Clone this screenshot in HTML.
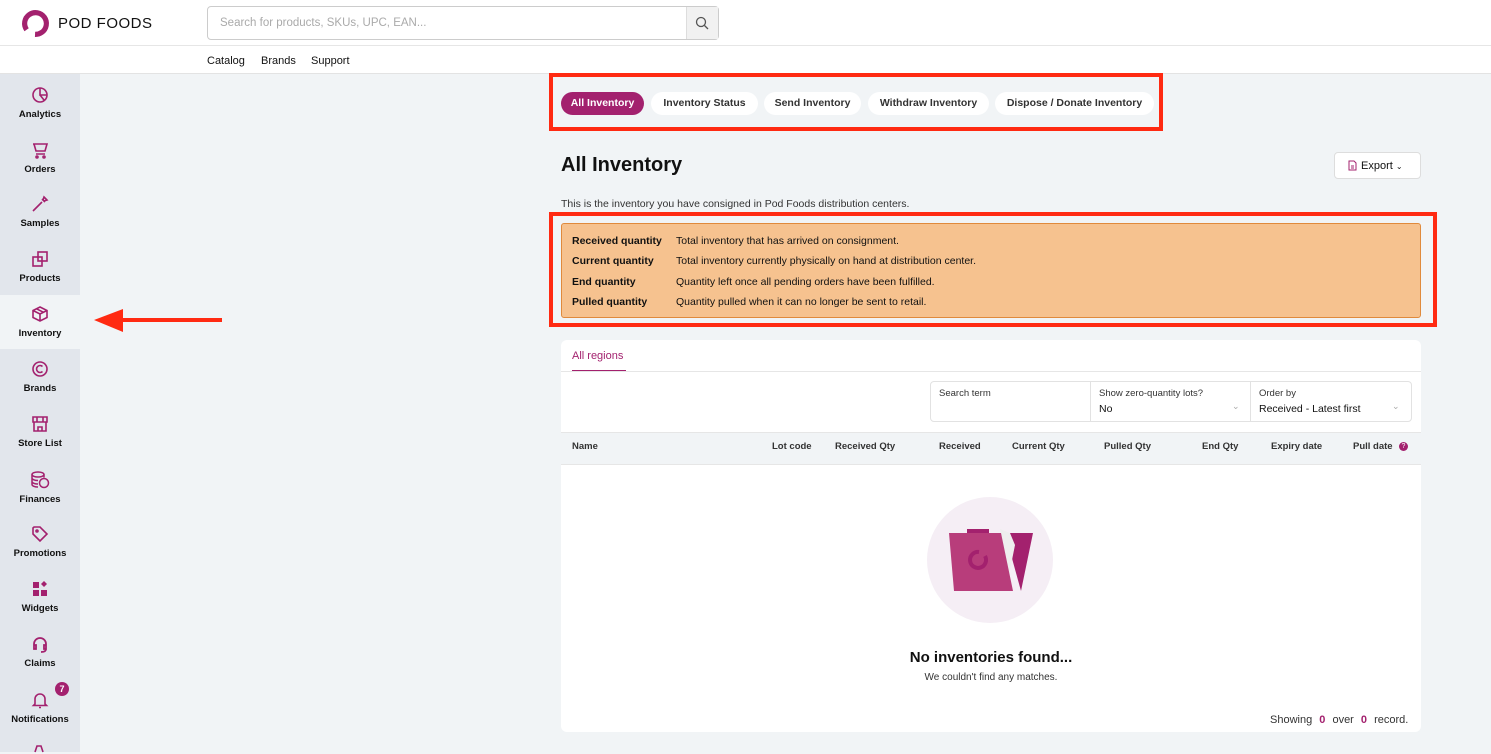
<!DOCTYPE html>
<html><head><style>
*{box-sizing:border-box;margin:0;padding:0}
body{width:1491px;height:752px;overflow:hidden;font-family:"Liberation Sans",sans-serif;background:#f1f4f6;position:relative;color:#111}
.abs{position:absolute}
.hdr{left:0;top:0;width:1491px;height:46px;background:#fff;border-bottom:1px solid #e6e6e6}
.nav{left:0;top:46px;width:1491px;height:28px;background:#fff;border-bottom:1px solid #e3e3e3;font-size:11px}
.side{left:0;top:74px;width:80px;height:678px;background:#e2e6ec}
.item{position:absolute;left:0;width:80px;text-align:center;font-size:9.5px;font-weight:bold;color:#111}
.item svg{display:block;margin:0 auto 5px}
.pill{position:absolute;top:92px;height:23px;border-radius:12px;background:#fff;font-size:10.5px;font-weight:bold;color:#333;line-height:23px;text-align:center}
.red{position:absolute;border:4px solid #ff2a12}
.orow{position:absolute;left:572px;font-size:10.5px}
.orow b{display:inline-block;width:104px}
.th{position:absolute;top:441px;font-size:9.5px;font-weight:bold;color:#333}
</style></head><body>
<div class="abs hdr"></div>
<svg class="abs" style="left:21px;top:9px" width="29" height="29" viewBox="0 0 28 28"><circle cx="14" cy="14" r="10.5" fill="none" stroke="#a3216e" stroke-width="5" stroke-dasharray="56 10" transform="rotate(145 14 14)"/></svg>
<div class="abs" style="left:58px;top:15px;font-size:15px;letter-spacing:0.5px;color:#111">POD FOODS</div>
<div class="abs" style="left:207px;top:6px;width:512px;height:34px;border:1px solid #ccc;border-radius:4px;background:#fff"></div>
<div class="abs" style="left:686px;top:7px;width:32px;height:32px;background:#f1f1f1;border-left:1px solid #ddd"></div>
<svg class="abs" style="left:695px;top:16px" width="14" height="14" viewBox="0 0 14 14"><circle cx="6" cy="6" r="4.5" fill="none" stroke="#555" stroke-width="1.3"/><path d="M9.5 9.5L13 13" stroke="#555" stroke-width="1.3"/></svg>
<div class="abs" style="left:220px;top:17px;font-size:11.5px;color:#aaa">Search for products, SKUs, UPC, EAN...</div>
<div class="abs nav"><span class="abs" style="left:207px;top:9px">Catalog</span><span class="abs" style="left:261px;top:9px">Brands</span><span class="abs" style="left:311px;top:9px">Support</span></div>
<div class="abs side"></div>
<div class="abs" style="left:0;top:295px;width:80px;height:54px;background:#f1f4f6"></div>
<div class="item" style="top:86px"><svg width="18" height="18" viewBox="0 0 18 18" fill="none" stroke="#a3216e" stroke-width="1.6"><circle cx="9" cy="9" r="7"/><path d="M9 2v7h7M9 9l4 5"/></svg>Analytics</div>
<div class="item" style="top:141px"><svg width="18" height="18" viewBox="0 0 18 18" fill="none" stroke="#a3216e" stroke-width="1.6"><path d="M2 3h14l-2 7H5L3 3M5 13h9"/><circle cx="6" cy="16" r="1"/><circle cx="13" cy="16" r="1"/></svg>Orders</div>
<div class="item" style="top:195px"><svg width="18" height="18" viewBox="0 0 18 18" fill="none" stroke="#a3216e" stroke-width="1.6"><path d="M3 15l8-8M11 4l3 3M13 2l3 3-3 1-1-1zM3 15l-1 1"/></svg>Samples</div>
<div class="item" style="top:250px"><svg width="18" height="18" viewBox="0 0 18 18" fill="none" stroke="#a3216e" stroke-width="1.6"><rect x="2" y="7" width="9" height="9"/><rect x="7" y="2" width="9" height="9"/></svg>Products</div>
<div class="item" style="top:305px"><svg width="18" height="18" viewBox="0 0 18 18" fill="none" stroke="#a3216e" stroke-width="1.6"><path d="M9 2l7 3.5v7L9 16l-7-3.5v-7zM2 5.5L9 9l7-3.5M9 9v7M5.5 3.8l7 3.5"/></svg>Inventory</div>
<div class="item" style="top:360px"><svg width="18" height="18" viewBox="0 0 18 18" fill="none" stroke="#a3216e" stroke-width="1.6"><circle cx="9" cy="9" r="7"/><path d="M11.5 6.5a3.5 3.5 0 1 0 0 5"/></svg>Brands</div>
<div class="item" style="top:415px"><svg width="18" height="18" viewBox="0 0 18 18" fill="none" stroke="#a3216e" stroke-width="1.6"><path d="M2 2h14v5H2zM3 7v9h12V7M7 16v-4h4v4M6 2v5M12 2v5"/></svg>Store List</div>
<div class="item" style="top:471px"><svg width="20" height="18" viewBox="0 0 20 18" fill="none" stroke="#a3216e" stroke-width="1.5"><ellipse cx="8" cy="3.5" rx="6" ry="2.5"/><path d="M2 3.5v10c0 1.4 2.7 2.5 6 2.5M2 7c0 1.4 2.7 2.5 6 2.5M2 10.5c0 1.4 2.7 2.5 6 2.5M14 3.5v3"/><circle cx="14" cy="12" r="4.5"/></svg>Finances</div>
<div class="item" style="top:525px"><svg width="18" height="18" viewBox="0 0 18 18" fill="none" stroke="#a3216e" stroke-width="1.6"><path d="M2 3l1-1h6l7 7-7 7-7-7V3z"/><circle cx="6" cy="6" r="1"/></svg>Promotions</div>
<div class="item" style="top:580px"><svg width="18" height="18" viewBox="0 0 18 18" fill="#a3216e"><rect x="2" y="2" width="6" height="6"/><rect x="2" y="10" width="6" height="6"/><rect x="10" y="10" width="6" height="6"/><path d="M13 1l3 3-3 3-3-3z"/></svg>Widgets</div>
<div class="item" style="top:635px"><svg width="18" height="18" viewBox="0 0 18 18" fill="none" stroke="#a3216e" stroke-width="1.8"><path d="M3 11V9a6 6 0 0 1 12 0v2M3 10h2v4H3zM13 10h2v4h-2zM15 14c0 2-2 3-5 3"/></svg>Claims</div>
<div class="item" style="top:691px"><svg width="18" height="18" viewBox="0 0 18 18" fill="none" stroke="#a3216e" stroke-width="1.6"><path d="M4 13V8a5 5 0 0 1 10 0v5l1.5 1.5h-13zM8 16.5h2"/></svg>Notifications</div>
<div class="abs" style="left:55px;top:682px;width:14px;height:14px;border-radius:7px;background:#a3216e;color:#fff;font-size:9px;font-weight:bold;text-align:center;line-height:14px">7</div>
<svg class="abs" style="left:30px;top:742px" width="18" height="12" viewBox="0 0 18 12" fill="none" stroke="#a3216e" stroke-width="1.6"><path d="M5 10l2-6h4l2 6"/></svg>
<svg class="abs" style="left:92px;top:307px" width="134" height="28" viewBox="0 0 134 28"><path d="M30 13h100" stroke="#ff2a12" stroke-width="4"/><path d="M2 13L31 2v23z" fill="#ff2a12"/></svg>

<div class="red" style="left:549px;top:73px;width:614px;height:58px"></div>
<div class="pill" style="left:561px;width:83px;background:#a3216e;color:#fff">All Inventory</div>
<div class="pill" style="left:651px;width:107px">Inventory Status</div>
<div class="pill" style="left:764px;width:97px">Send Inventory</div>
<div class="pill" style="left:868px;width:121px">Withdraw Inventory</div>
<div class="pill" style="left:995px;width:159px">Dispose / Donate Inventory</div>

<div class="abs" style="left:561px;top:154px;font-size:20px;font-weight:bold">All Inventory</div>
<div class="abs" style="left:1334px;top:152px;width:87px;height:27px;background:#fff;border:1px solid #ddd;border-radius:4px;font-size:11px;line-height:27px;padding-left:26px">Export <span style="font-size:8px">&#8964;</span></div>
<svg class="abs" style="left:1348px;top:160px" width="9" height="11" viewBox="0 0 9 11" fill="none" stroke="#a3216e"><path d="M1 1h5l2 2v7H1zM3 6h3M3 8h3"/></svg>
<div class="abs" style="left:561px;top:198px;font-size:10.5px;color:#333">This is the inventory you have consigned in Pod Foods distribution centers.</div>

<div class="red" style="left:549px;top:212px;width:888px;height:115px"></div>
<div class="abs" style="left:561px;top:223px;width:860px;height:95px;background:#f6c28f;border:1px solid #e08a3c;border-radius:3px"></div>
<div class="orow" style="top:235px"><b>Received quantity</b>Total inventory that has arrived on consignment.</div>
<div class="orow" style="top:255px"><b>Current quantity</b>Total inventory currently physically on hand at distribution center.</div>
<div class="orow" style="top:276px"><b>End quantity</b>Quantity left once all pending orders have been fulfilled.</div>
<div class="orow" style="top:296px"><b>Pulled quantity</b>Quantity pulled when it can no longer be sent to retail.</div>

<div class="abs" style="left:561px;top:340px;width:860px;height:392px;background:#fff;border-radius:6px"></div>
<div class="abs" style="left:572px;top:350px;font-size:11px;color:#a3216e">All regions</div>
<div class="abs" style="left:572px;top:370px;width:54px;height:2px;background:#a3216e"></div>
<div class="abs" style="left:561px;top:371px;width:860px;height:1px;background:#e6e6e6"></div>
<div class="abs" style="left:930px;top:381px;width:482px;height:41px;border:1px solid #e2e2e2;border-radius:4px"></div>
<div class="abs" style="left:1090px;top:382px;width:1px;height:39px;background:#e2e2e2"></div>
<div class="abs" style="left:1250px;top:382px;width:1px;height:39px;background:#e2e2e2"></div>
<div class="abs" style="left:939px;top:388px;font-size:9.5px;color:#333">Search term</div>
<div class="abs" style="left:1099px;top:388px;font-size:9.5px;color:#333">Show zero-quantity lots?</div>
<div class="abs" style="left:1099px;top:403px;font-size:10.5px">No</div>
<div class="abs" style="left:1259px;top:388px;font-size:9.5px;color:#333">Order by</div>
<div class="abs" style="left:1259px;top:403px;font-size:10.5px">Received - Latest first</div>
<div class="abs" style="left:1232px;top:401px;font-size:9px;color:#aaa">&#8964;</div>
<div class="abs" style="left:1392px;top:401px;font-size:9px;color:#aaa">&#8964;</div>
<div class="abs" style="left:561px;top:432px;width:860px;height:33px;background:#f1f4f6;border-top:1px solid #e6e6e6;border-bottom:1px solid #e6e6e6"></div>
<div class="th" style="left:572px">Name</div>
<div class="th" style="left:772px">Lot code</div>
<div class="th" style="left:835px">Received Qty</div>
<div class="th" style="left:939px">Received</div>
<div class="th" style="left:1012px">Current Qty</div>
<div class="th" style="left:1104px">Pulled Qty</div>
<div class="th" style="left:1202px">End Qty</div>
<div class="th" style="left:1271px">Expiry date</div>
<div class="th" style="left:1353px">Pull date</div>
<div class="abs" style="left:1399px;top:442px;width:9px;height:9px;border-radius:5px;background:#a3216e;color:#fff;font-size:7px;text-align:center;line-height:9px">?</div>

<div class="abs" style="left:927px;top:497px;width:126px;height:126px;border-radius:63px;background:#f5eef5"></div>
<svg class="abs" style="left:945px;top:525px" width="90" height="72" viewBox="0 0 90 72"><path d="M60 8l28 0-12 58z" fill="#a3216e"/><path d="M55 4l10 4 5 12-6 30z" fill="#eee"/><path d="M22 4h22v5H22z" fill="#a3216e"/><path d="M4 8h52l12 58H9z" fill="#b83d7b"/><path d="M40 31a8 8 0 1 1-6-4" fill="none" stroke="#a3216e" stroke-width="4"/></svg>
<div class="abs" style="left:561px;top:649px;width:860px;text-align:center;font-size:15px;font-weight:bold">No inventories found...</div>
<div class="abs" style="left:561px;top:672px;width:860px;text-align:center;font-size:10px;color:#333">We couldn't find any matches.</div>
<div class="abs" style="left:1270px;top:714px;font-size:11px;color:#333">Showing <b style="color:#a3216e;margin:0 4px">0</b> over <b style="color:#a3216e;margin:0 4px">0</b> record.</div>
</body></html>
